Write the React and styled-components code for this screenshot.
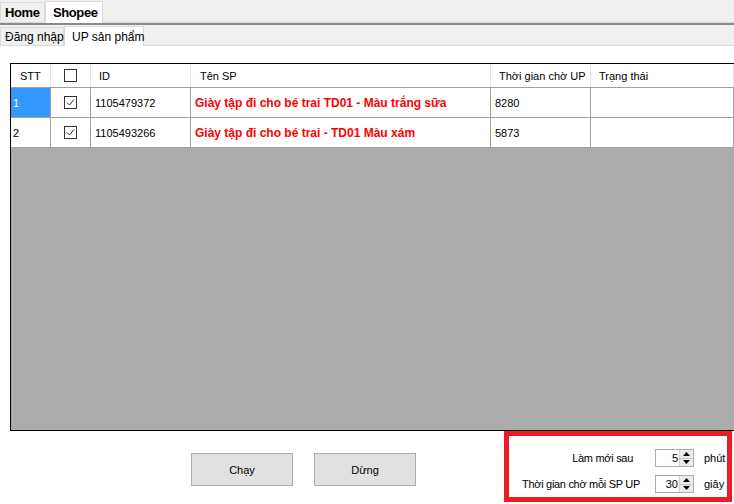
import React from 'react';
import styled, { createGlobalStyle } from 'styled-components';

const GlobalStyle = createGlobalStyle`
  html, body {
    margin: 0;
    padding: 0;
    background: #ffffff;
  }
  body {
    font-family: "Liberation Sans", Arial, sans-serif;
    font-size: 11px;
    color: #000;
  }
`;

const Window = styled.div`
  width: 734px;
  height: 504px;
  display: flex;
  flex-direction: column;
  overflow: hidden;
  background: #ffffff;
  white-space: nowrap;
`;

const TabStrip = styled.div`
  display: flex;
  align-items: flex-end;
  flex-shrink: 0;
  height: ${props => props.height}px;
  background: #f0f0f0;
  border-bottom: 1px solid #dadada;
  box-shadow: ${props => props.outer ? '0 2px 0 #8a8a8a' : 'none'};
  margin-bottom: ${props => props.outer ? '2px' : '0'};
  box-sizing: border-box;
`;

const Tab = styled.div`
  box-sizing: border-box;
  flex-shrink: 0;
  height: ${props => props.active ? '100%' : 'calc(100% - 2px)'};
  width: ${props => props.width}px;
  display: flex;
  align-items: center;
  padding-left: ${props => props.pad}px;
  background: ${props => props.active ? '#ffffff' : '#f0f0f0'};
  border: 1px solid #dadada;
  border-bottom: none;
  margin-bottom: ${props => props.active ? '-1px' : '0'};
  font-weight: ${props => props.bold ? 700 : 400};
  font-size: ${props => props.bold ? '13px' : '12px'};
  letter-spacing: ${props => props.bold ? '-0.4px' : '0'};
  position: relative;
  z-index: ${props => props.active ? 1 : 0};
`;

const Page = styled.div`
  flex: 1;
  display: flex;
  flex-direction: column;
  padding: 17px 0 0 10px;
  background: #ffffff;
`;

const Grid = styled.div`
  height: 368px;
  flex-shrink: 0;
  border: 1px solid #000;
  border-right: none;
  background: #ababab;
  display: flex;
  flex-direction: column;
  box-sizing: border-box;
`;

const columns = '40px 40px 100px 300px 100px 1fr';

const HeaderRow = styled.div`
  display: grid;
  grid-template-columns: ${columns};
  height: 24px;
  background: #ffffff;
  border-bottom: 1px solid #a0a0a0;
  box-sizing: border-box;
`;

const HeaderCell = styled.div`
  display: flex;
  align-items: center;
  justify-content: ${props => props.center ? 'center' : 'flex-start'};
  padding-left: ${props => props.pad ?? 6}px;
  border-right: 1px solid #e3e3e3;
  font-size: 11px;
`;

const Row = styled.div`
  display: grid;
  grid-template-columns: ${columns};
  height: 30px;
  background: #ffffff;
  border-bottom: 1px solid #a0a0a0;
  box-sizing: border-box;
`;

const Cell = styled.div`
  display: flex;
  align-items: center;
  justify-content: ${props => props.center ? 'center' : 'flex-start'};
  padding-left: ${props => props.center ? 0 : props.pad ?? 4}px;
  border-right: 1px solid #a0a0a0;
  background: ${props => props.selected ? '#3399ff' : 'transparent'};
  color: ${props => props.selected ? '#ffffff' : props.red ? '#ff0000' : '#000'};
  font-weight: ${props => props.red ? 700 : 400};
  font-size: ${props => props.red ? '12px' : '11px'};
  overflow: hidden;
`;

const CheckBox = styled.div`
  width: 11px;
  height: 11px;
  border: 1px solid #333;
  background: #fff;
  display: flex;
  align-items: center;
  justify-content: center;
`;

const Bottom = styled.div`
  display: flex;
  flex: 1;
`;

const ButtonArea = styled.div`
  display: flex;
  gap: 21px;
  padding: 22px 0 0 181px;
`;

const Button = styled.button`
  width: 102px;
  height: 33px;
  background: #e1e1e1;
  border: 1px solid #adadad;
  font-family: "Liberation Sans", Arial, sans-serif;
  font-size: 11px;
  color: #000;
  padding: 0;
`;

const SettingsBox = styled.div`
  width: 228px;
  height: 71px;
  margin-left: auto;
  margin-right: 2px;
  border: 5px solid #ed1c24;
  box-sizing: border-box;
  display: flex;
  flex-direction: column;
  gap: 8px;
  padding: 13px 3px 0 0;
`;

const SettingRow = styled.div`
  display: flex;
  align-items: center;
  justify-content: flex-end;
  height: 18px;
`;

const Label = styled.span`
  margin-right: ${props => props.gap}px;
  font-size: 11px;
  letter-spacing: -0.3px;
`;

const Unit = styled.span`
  width: 20px;
  margin-left: 10px;
  font-size: 11px;
`;

const Spinner = styled.div`
  width: 39px;
  height: 18px;
  flex-shrink: 0;
  border: 1px solid #abadb3;
  box-sizing: border-box;
  display: flex;
  background: #fff;
`;

const SpinValue = styled.div`
  flex: 1;
  text-align: right;
  padding-right: 1px;
  line-height: 16px;
  font-size: 11px;
`;

const SpinButtons = styled.div`
  width: 13px;
  display: flex;
  flex-direction: column;
  border-left: 1px solid #d0d0d0;
`;

const SpinButton = styled.div`
  flex: 1;
  display: flex;
  align-items: center;
  justify-content: center;
  background: #ececec;
  border-bottom: ${props => props.top ? '1px solid #c8c8c8' : 'none'};
`;

const Check = () => (
  <svg width="9" height="9" viewBox="0 0 9 9">
    <path d="M1 4.5 L3.5 7 L8 1.5" fill="none" stroke="#333" strokeWidth="1" />
  </svg>
);

const Arrow = ({ up }) => (
  <svg width="7" height="4" viewBox="0 0 7 4">
    <path d={up ? 'M0 4 L3.5 0 L7 4 Z' : 'M0 0 L3.5 4 L7 0 Z'} fill="#000" />
  </svg>
);

const NumericUpDown = ({ value }) => (
  <Spinner>
    <SpinValue>{value}</SpinValue>
    <SpinButtons>
      <SpinButton top><Arrow up /></SpinButton>
      <SpinButton><Arrow /></SpinButton>
    </SpinButtons>
  </Spinner>
);

const products = [
  { stt: 1, id: '1105479372', name: 'Giày tập đi cho bé trai TD01 - Màu trắng sữa', wait: '8280' },
  { stt: 2, id: '1105493266', name: 'Giày tập đi cho bé trai - TD01 Màu xám', wait: '5873' },
];

const App = () => {
  return (
    <Window>
      <GlobalStyle />
      <TabStrip height={23} outer>
        <Tab width={45} pad={4} bold>Home</Tab>
        <Tab width={58} pad={7} bold active>Shopee</Tab>
      </TabStrip>
      <TabStrip height={21}>
        <Tab width={64} pad={4}>Đăng nhập</Tab>
        <Tab width={80} pad={7} active>UP sản phẩm</Tab>
      </TabStrip>
      <Page>
        <Grid>
          <HeaderRow>
            <HeaderCell pad={9}>STT</HeaderCell>
            <HeaderCell center pad={0}><CheckBox /></HeaderCell>
            <HeaderCell pad={8}>ID</HeaderCell>
            <HeaderCell pad={9}>Tên SP</HeaderCell>
            <HeaderCell pad={8}>Thời gian chờ UP</HeaderCell>
            <HeaderCell pad={8}>Trạng thái</HeaderCell>
          </HeaderRow>
          {products.map((p, i) => (
            <Row key={p.id}>
              <Cell pad={2} selected={i === 0}>{p.stt}</Cell>
              <Cell center><CheckBox><Check /></CheckBox></Cell>
              <Cell>{p.id}</Cell>
              <Cell red>{p.name}</Cell>
              <Cell>{p.wait}</Cell>
              <Cell />
            </Row>
          ))}
        </Grid>
        <Bottom>
          <ButtonArea>
            <Button>Chạy</Button>
            <Button>Dừng</Button>
          </ButtonArea>
          <SettingsBox>
            <SettingRow>
              <Label gap={22}>Làm mới sau</Label>
              <NumericUpDown value="5" />
              <Unit>phút</Unit>
            </SettingRow>
            <SettingRow>
              <Label gap={15}>Thời gian chờ mỗi SP UP</Label>
              <NumericUpDown value="30" />
              <Unit>giây</Unit>
            </SettingRow>
          </SettingsBox>
        </Bottom>
      </Page>
    </Window>
  );
};

export default App;
